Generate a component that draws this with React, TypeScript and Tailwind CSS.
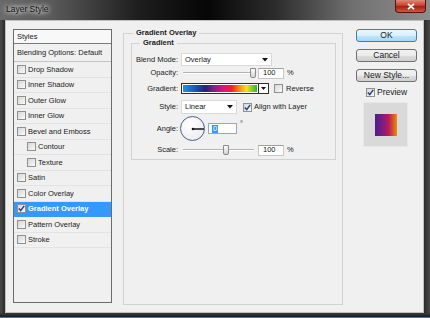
import React from "react";

function Check({ checked = false }: { checked?: boolean }) {
  return (
    <span className="shrink-0 w-[9px] h-[9px] border border-[#8e8f8f] bg-[linear-gradient(135deg,#d6d6d6,#fbfbfb)] flex items-center justify-center">
      {checked && (
        <svg width="7" height="7" viewBox="0 0 7 7">
          <path d="M0.8 3.6 L2.7 5.6 L6.2 0.9" fill="none" stroke="#22408a" strokeWidth="1.5" />
        </svg>
      )}
    </span>
  );
}

function Arrow() {
  return (
    <svg width="6" height="4" viewBox="0 0 6 4" className="shrink-0">
      <path d="M0 0 H6 L3 3.5 Z" fill="#111" />
    </svg>
  );
}

function Slider({ pos }: { pos: number }) {
  return (
    <div className="relative w-[71px] h-[10px] flex items-center">
      <div className="w-full h-[2px] bg-[#b4b4b4] border-b border-white" />
      <div
        className="absolute top-0 w-[6px] h-[10px] rounded-b-[2px] border border-[#8a8a8a] bg-[linear-gradient(#fafafa,#d4d4d4)]"
        style={{ left: pos }}
      />
    </div>
  );
}

function NumBox({ value }: { value: string }) {
  return (
    <div className="w-[26px] h-[11px] bg-white border border-[#c8c8c8] border-t-[#a0a0a0] flex items-center pl-[4px] leading-none">
      {value}
    </div>
  );
}

const items: { label: string; indent?: boolean; selected?: boolean }[] = [
  { label: "Drop Shadow" },
  { label: "Inner Shadow" },
  { label: "Outer Glow" },
  { label: "Inner Glow" },
  { label: "Bevel and Emboss" },
  { label: "Contour", indent: true },
  { label: "Texture", indent: true },
  { label: "Satin" },
  { label: "Color Overlay" },
  { label: "Gradient Overlay", selected: true },
  { label: "Pattern Overlay" },
  { label: "Stroke" },
];

export default function App() {
  return (
    <div className="w-[430px] h-[318px] flex flex-col bg-[#2b2b2b] font-['Liberation_Sans',Arial,sans-serif] text-[7.5px] text-[#1a1a1a] overflow-hidden">
      {/* Title bar */}
      <div className="h-[20px] shrink-0 flex items-start justify-between bg-[linear-gradient(to_right,#6a6a6a_0%,#5a5a5a_12%,#1e1e1e_32%,#060606_48%,#2c2c2c_64%,#707070_82%,#8e8e8e_100%)]">
        <span className="ml-[6px] mt-[4px] text-[8.5px] leading-[10px] text-[#111] [text-shadow:0_0_4px_#fff,0_0_6px_#fff]">
          Layer Style
        </span>
        <div className="mr-[4px] w-[31px] h-[13px] rounded-b-[4px] border border-t-0 border-[#5a1010] bg-[linear-gradient(#e08a7c,#c8422f_45%,#a82010_55%,#d05a40)] flex items-center justify-center">
          <svg width="8" height="7" viewBox="0 0 8 7">
            <path d="M1 0.8 L7 6.2 M7 0.8 L1 6.2" stroke="#fff" strokeWidth="1.8" />
          </svg>
        </div>
      </div>

      {/* Middle row */}
      <div className="flex h-[293px] shrink-0">
        <div className="w-[5px] bg-[linear-gradient(to_right,#4a4a4a,#2a2a2a)]" />
        <div className="w-[419px] bg-[#f0f0f0] border border-[#c0c0c0] flex items-start pl-[7px] pt-[7px]">
          {/* Styles list */}
          <div className="mt-[1px] w-[99px] h-[274px] border border-[#6b6b6b] bg-[#f0f0f0] flex flex-col">
            <div className="h-[14px] border-b border-[#7a7a7a] bg-[#f8f8f8] flex items-center pl-[3px]">Styles</div>
            <div className="h-[18px] border-b border-[#c4c4c4] flex items-center pl-[3px]">Blending Options: Default</div>
            {items.map((it) => (
              <div
                key={it.label}
                className={`h-[15.5px] shrink-0 flex items-center gap-[2px] border-b ${
                  it.selected ? "bg-[#3399ff] border-[#3399ff] text-white font-bold" : "border-[#e3e3e3]"
                } ${it.indent ? "pl-[13px]" : "pl-[3px]"}`}
              >
                <Check checked={it.selected} />
                <span>{it.label}</span>
              </div>
            ))}
          </div>

          {/* Gradient Overlay group */}
          <fieldset className="ml-[11px] w-[220px] h-[277px] border border-[#d2d2d2] pl-[7px] pr-[6px] m-0">
            <legend className="ml-[2px] px-[3px] font-bold text-[7.5px] leading-[10px]">Gradient Overlay</legend>
            <fieldset className="w-[205px] border border-[#d2d2d2] m-0 p-0 pt-[5px] pb-[4px] flex flex-col">
              <legend className="ml-[8px] px-[3px] font-bold text-[7.5px] leading-[10px]">Gradient</legend>

              <div className="flex items-center h-[13px]">
                <span className="w-[46px] text-right">Blend Mode:</span>
                <div className="ml-[3px] w-[91px] h-[13px] bg-white border border-[#dadada] flex items-center justify-between pl-[3px] pr-[3px]">
                  <span>Overlay</span>
                  <Arrow />
                </div>
              </div>

              <div className="flex items-center h-[10px] mt-[2px]">
                <span className="w-[46px] text-right">Opacity:</span>
                <div className="ml-[5px]">
                  <Slider pos={67} />
                </div>
                <div className="ml-[4px]">
                  <NumBox value="100" />
                </div>
                <span className="ml-[3px]">%</span>
              </div>

              <div className="flex items-center h-[11px] mt-[5px]">
                <span className="w-[46px] text-right">Gradient:</span>
                <div className="ml-[3px] w-[78px] h-[11px] border border-[#2e2e2e] p-[1px] bg-white">
                  <div className="w-full h-full bg-[linear-gradient(to_right,#1e96e0_0%,#1d50b8_18%,#26207a_30%,#8a1e8e_42%,#e0147c_55%,#ee2424_66%,#f88a1c_76%,#f6e21e_86%,#8ccc28_93%,#2eb43a_100%)]" />
                </div>
                <div className="w-[10px] h-[11px] border border-l-0 border-[#2e2e2e] bg-white flex items-center justify-center">
                  <svg width="5" height="3" viewBox="0 0 5 3">
                    <path d="M0 0 H5 L2.5 3 Z" fill="#111" />
                  </svg>
                </div>
                <div className="ml-[5px]">
                  <Check />
                </div>
                <span className="ml-[3px]">Reverse</span>
              </div>

              <div className="flex items-center h-[14px] mt-[6px]">
                <span className="w-[46px] text-right">Style:</span>
                <div className="ml-[3px] w-[56px] h-[14px] bg-white border border-[#dadada] flex items-center justify-between pl-[3px] pr-[3px]">
                  <span>Linear</span>
                  <Arrow />
                </div>
                <div className="ml-[6px]">
                  <Check checked />
                </div>
                <span className="ml-[2px]">Align with Layer</span>
              </div>

              <div className="flex items-center h-[25px] mt-[2px]">
                <span className="w-[46px] text-right">Angle:</span>
                <div className="ml-[2px] w-[25px] h-[25px] rounded-full border-[1.5px] border-[#4d5f8e] bg-[radial-gradient(circle_at_40%_35%,#ffffff,#e8e8ee)] flex items-center justify-center">
                  <svg width="22" height="22" viewBox="0 0 22 22" className="shrink-0">
                    <circle cx="11" cy="11" r="1.3" fill="#111" />
                    <path d="M11 11 H22" stroke="#222" strokeWidth="1.6" />
                  </svg>
                </div>
                <div className="ml-[3px] w-[29px] h-[11px] bg-white border border-[#7eaee0] flex items-center pl-[3px]">
                  <span className="bg-[#3399ff] text-white px-[1px] leading-[8px]">0</span>
                </div>
                <span className="ml-[3px] self-start mt-[4px] leading-none">°</span>
              </div>

              <div className="flex items-center h-[10px] mt-[4px]">
                <span className="w-[46px] text-right">Scale:</span>
                <div className="ml-[5px]">
                  <Slider pos={40} />
                </div>
                <div className="ml-[4px]">
                  <NumBox value="100" />
                </div>
                <span className="ml-[3px]">%</span>
              </div>
            </fieldset>
          </fieldset>

          {/* Right column */}
          <div className="ml-[13px] mt-[1px] w-[61px] flex flex-col text-[8.5px]">
            <div className="h-[13px] rounded-[3px] border border-[#3c7fb1] bg-[linear-gradient(#eaf6fd,#d9f0fc_50%,#bee6fd_51%,#a7d9f5)] flex items-center justify-center">
              OK
            </div>
            <div className="mt-[7px] h-[13px] rounded-[3px] border border-[#707070] bg-[linear-gradient(#f2f2f2,#ebebeb_50%,#dddddd_51%,#cfcfcf)] flex items-center justify-center">
              Cancel
            </div>
            <div className="mt-[7px] h-[13px] rounded-[3px] border border-[#707070] bg-[linear-gradient(#f2f2f2,#ebebeb_50%,#dddddd_51%,#cfcfcf)] flex items-center justify-center">
              New Style...
            </div>
            <div className="mt-[6px] h-[9px] flex items-center pl-[10px] gap-[2px]">
              <Check checked />
              <span>Preview</span>
            </div>
            <div className="mt-[5px] ml-[7px] w-[45px] h-[45px] bg-[#d9d9d9] border border-[#e8e8e8] flex items-center justify-center">
              <div className="w-[22px] h-[22px] bg-[linear-gradient(to_right,#4e1c8c,#8a1a7a_40%,#b81c5a_62%,#d8601c_85%,#e49018)]" />
            </div>
          </div>
        </div>
        <div className="w-[6px] bg-[linear-gradient(to_right,#2a2a2a,#4a4a4a)]" />
      </div>

      {/* Bottom frame */}
      <div className="h-[5px] shrink-0 flex flex-col">
        <div className="h-[4px] bg-[linear-gradient(#3c3c3c,#1c1c1c)]" />
        <div className="h-[1px] bg-[#2a8a9c]" />
      </div>
    </div>
  );
}
